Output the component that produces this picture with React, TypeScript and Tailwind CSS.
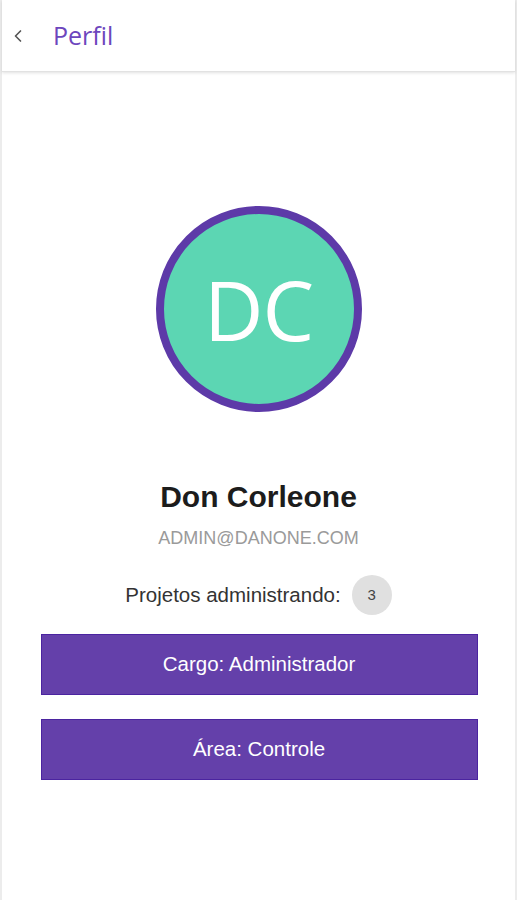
import { ChevronLeft } from "lucide-react";

const App: React.FC = () => {
  return (
    <div className="min-h-[900px] w-full bg-white border-x-2 border-[#ececec] font-['Liberation_Sans',Arial,sans-serif]">
      {/* Cabeçalho */}
      <header className="h-[72px] flex items-center border-b border-[#e2e2e2] shadow-[0_1px_3px_rgba(0,0,0,0.12)]">
        <ChevronLeft className="ml-[6px] text-[#555]" size={20} strokeWidth={2} />
        <h1 className="ml-[25px] text-[25px] text-[#6d46bd] font-['Open_Sans',sans-serif] leading-none">
          Perfil
        </h1>
      </header>

      <div className="flex flex-col items-center">
        {/* Avatar */}
        <div className="mt-[134px] w-[206px] h-[206px] rounded-full border-[8px] border-[#5d3aa8] bg-[#5cd6b3] flex items-center justify-center">
          <span className="text-white text-[82px] font-['Open_Sans',sans-serif] leading-none tracking-[-1px]">
            DC
          </span>
        </div>

        <h2 className="mt-[70px] text-[30px] font-bold text-[#1c1c1c] leading-none">
          Don Corleone
        </h2>
        <p className="mt-[17px] text-[18px] text-[#9a9a9a] leading-none">
          ADMIN@DANONE.COM
        </p>

        <div className="mt-[28px] flex items-center">
          <span className="text-[20.5px] text-[#333] leading-none">
            Projetos administrando:
          </span>
          <span className="ml-[11px] w-[40px] h-[40px] rounded-full bg-[#e0e0e0] flex items-center justify-center text-[15px] text-[#444]">
            3
          </span>
        </div>

        <div className="mt-[19px] w-[437px] ml-[1px] flex flex-col gap-[24px]">
          <div className="h-[61px] bg-[#6440aa] border border-[#4b24a0] flex items-center justify-center text-white text-[20.5px]">
            Cargo: Administrador
          </div>
          <div className="h-[61px] bg-[#6440aa] border border-[#4b24a0] flex items-center justify-center text-white text-[20.5px]">
            Área: Controle
          </div>
        </div>
      </div>
    </div>
  );
};

export default App;
